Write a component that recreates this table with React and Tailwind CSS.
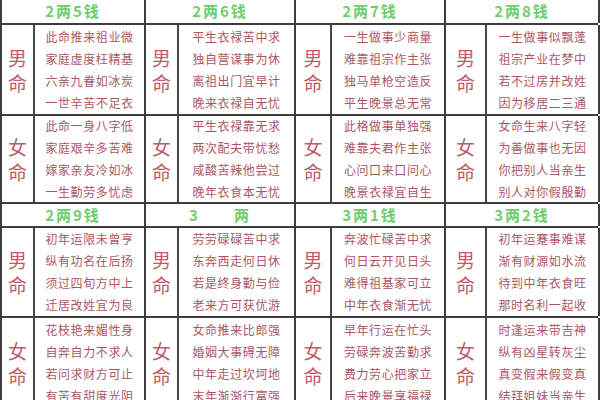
import React from "react";

const COLS = [
  { w: "w-[144px]", lw: "w-[33px]" },
  { w: "w-[150px]", lw: "w-[33px]" },
  { w: "w-[150px]", lw: "w-[36px]" },
  { w: "w-[154px]", lw: "w-[41px]" },
];

const SECTIONS = [
  {
    headers: ["2两5钱", "2两6钱", "2两7钱", "2两8钱"],
    hh: "h-[26px]",
    male: [
      ["此命推来祖业微", "家庭虚度枉精基", "六亲九眷如冰炭", "一世辛苦不足衣"],
      ["平生衣禄苦中求", "独自营谋事为休", "离祖出门宜早计", "晚来衣禄自无忧"],
      ["一生做事少商量", "难靠祖宗作主张", "独马单枪空造反", "平生晚景总无常"],
      ["一生做事似飘蓬", "祖宗产业在梦中", "若不过房并改姓", "因为移居二三通"],
    ],
    mh: "h-[91px]",
    female: [
      ["此命一身八字低", "家庭艰辛多苦难", "嫁家亲友冷如冰", "一生勤劳多忧虑"],
      ["平生衣禄靠无求", "两次配夫带忧愁", "咸酸苦辣他尝过", "晚年衣食本无忧"],
      ["此格做事单独强", "难靠夫君作主张", "心问口来口问心", "晚景衣禄宜自生"],
      ["女命生来八字轻", "为善做事也无因", "你把别人当亲生", "别人对你假殷勤"],
    ],
    fh: "h-[88px]",
  },
  {
    headers: ["2两9钱", "3　　两", "3两1钱", "3两2钱"],
    hh: "h-[24px]",
    male: [
      ["初年运限未曾亨", "纵有功名在后扬", "须过四旬方中上", "迁居改姓宜为良"],
      ["劳劳碌碌苦中求", "东奔西走何日休", "若是终身勤与俭", "老来方可获优游"],
      ["奔波忙碌苦中求", "何日云开见日头", "难得祖基家可立", "中年衣食渐无忧"],
      ["初年运蹇事难谋", "渐有财源如水流", "待到中年衣食旺", "那时名利一起收"],
    ],
    mh: "h-[90px]",
    female: [
      ["花枝艳来媚性身", "自奔自力不求人", "若问求财方可止", "有苦有甜度光阴"],
      ["女命推来比郎强", "婚姻大事碍无障", "中年走过坎坷地", "末年渐渐行富强"],
      ["早年行运在忙头", "劳碌奔波苦勤求", "费力劳心把家立", "后来晚景享福禄"],
      ["时逢运来带吉神", "纵有凶星转灰尘", "真变假来假变真", "结拜姐妹当亲生"],
    ],
    fh: "h-[92px]",
  },
];

const FONT = { fontFamily: '"Noto Sans CJK SC", "Noto Sans", sans-serif' };

function Block({ label, lines, h, last }) {
  return (
    <div className={`flex border-b-2 border-[#3d3d3d] ${h}`}>
      {COLS.map((c, i) => (
        <div key={i} className={`flex ${c.w} shrink-0 border-r-2 border-[#3d3d3d]`}>
          <div
            className={`flex ${c.lw} shrink-0 items-center justify-center border-r-2 border-[#454545]`}
          >
            <div className="w-[19px] break-all text-center text-[19px] leading-[25px] text-[#bf5a68]">
              {label}
            </div>
          </div>
          <div
            className={`flex flex-1 flex-col items-center text-[12px] leading-[22px] tracking-[0.6px] text-[#ad5663] ${
              last ? "justify-start pt-[1px]" : "justify-center"
            }`}
          >
            {lines[i].map((t, j) => (
              <div key={j}>{t}</div>
            ))}
          </div>
        </div>
      ))}
    </div>
  );
}

export default function App() {
  return (
    <div className="h-[400px] w-[600px] overflow-hidden bg-white" style={FONT}>
      <div className="-mt-[1px] w-[598px] border-l-2 border-[#3d3d3d]">
        {SECTIONS.map((s, k) => (
          <div key={k}>
            <div className={`flex border-b-2 border-[#3d3d3d] ${s.hh}`}>
              {COLS.map((c, i) => (
                <div
                  key={i}
                  className={`flex ${c.w} shrink-0 items-center justify-center border-r-2 border-[#3d3d3d] text-[15px] font-semibold tracking-[2px] text-[#6fce6f]`}
                >
                  {s.headers[i]}
                </div>
              ))}
            </div>
            <Block label="男命" lines={s.male} h={s.mh} />
            <Block label="女命" lines={s.female} h={s.fh} last={k === 1} />
          </div>
        ))}
      </div>
    </div>
  );
}
